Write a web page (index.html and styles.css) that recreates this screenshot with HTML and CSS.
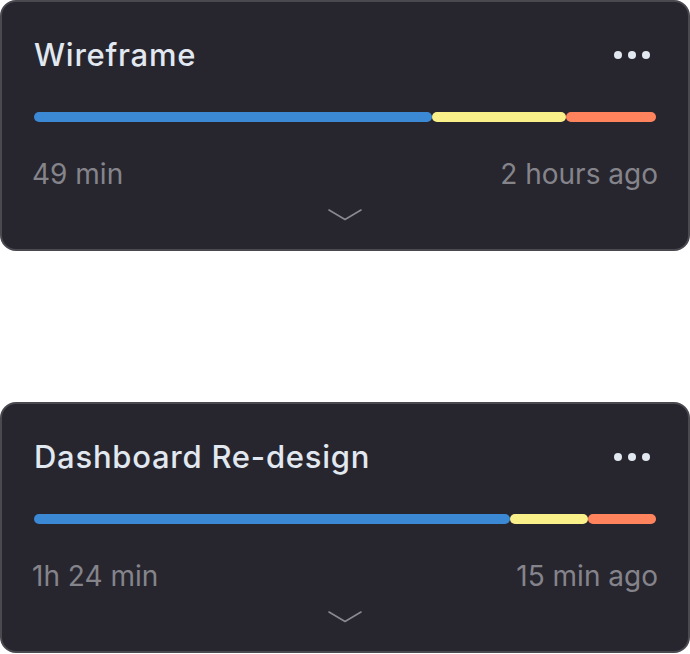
FILE: index.html
```html
<!DOCTYPE html>
<html lang="en">
<head>
    <meta charset="UTF-8">
    <meta name="viewport" content="width=device-width, initial-scale=1.0">
    <title>Tasks</title>
    <link rel="stylesheet" href="styles.css">
</head>
<body>
    <div class="task-list">
        <div class="task-card">
            <div class="task-header">
                <h2 class="task-title">Wireframe</h2>
                <div class="task-menu"><span></span><span></span><span></span></div>
            </div>
            <div class="task-bar">
                <div class="seg seg-blue" style="width: 64%"></div>
                <div class="seg seg-yellow" style="width: 21.5%"></div>
                <div class="seg seg-orange" style="width: 14.5%"></div>
            </div>
            <div class="task-footer">
                <span>49 min</span>
                <span>2 hours ago</span>
            </div>
            <div class="task-expand">
                <svg width="34" height="12" viewBox="0 0 34 12"><path d="M1 1 L17 10.5 L33 1" fill="none" stroke="#8a8990" stroke-width="1.6" stroke-linecap="round" stroke-linejoin="round"/></svg>
            </div>
        </div>

        <div class="task-card">
            <div class="task-header">
                <h2 class="task-title">Dashboard Re-design</h2>
                <div class="task-menu"><span></span><span></span><span></span></div>
            </div>
            <div class="task-bar">
                <div class="seg seg-blue" style="width: 76.5%"></div>
                <div class="seg seg-yellow" style="width: 12.5%"></div>
                <div class="seg seg-orange" style="width: 11%"></div>
            </div>
            <div class="task-footer">
                <span>1h 24 min</span>
                <span>15 min ago</span>
            </div>
            <div class="task-expand">
                <svg width="34" height="12" viewBox="0 0 34 12"><path d="M1 1 L17 10.5 L33 1" fill="none" stroke="#8a8990" stroke-width="1.6" stroke-linecap="round" stroke-linejoin="round"/></svg>
            </div>
        </div>
    </div>
</body>
</html>
```

FILE: styles.css
```css
body {
    margin: 0;
    background: #ffffff;
    font-family: 'Inter', 'Noto Sans', sans-serif;
}

.task-list {
    display: flex;
    flex-direction: column;
    gap: 151px;
}

.task-card {
    box-sizing: border-box;
    width: 690px;
    height: 251px;
    background: #27262f;
    border: 2px solid #4a4950;
    border-radius: 16px;
    padding: 32px 32px 0;
}

.task-header {
    display: flex;
    justify-content: space-between;
    align-items: center;
    height: 42px;
}

.task-title {
    margin: 0;
    font-size: 31px;
    line-height: 44px;
    font-weight: 500;
    letter-spacing: 0.75px;
    color: #e2e8f0;
}

.task-menu {
    display: flex;
    gap: 6px;
    margin-right: 6px;
}

.task-menu span {
    width: 8px;
    height: 8px;
    border-radius: 50%;
    background: #e2e8f0;
}

.task-bar {
    display: flex;
    height: 10px;
    margin-top: 36px;
}

.seg {
    height: 10px;
    border-radius: 5px;
}

.seg-blue {
    background: #3b88d4;
}

.seg-yellow {
    background: #faf08a;
}

.seg-orange {
    background: #ff845e;
}

.task-footer {
    display: flex;
    justify-content: space-between;
    margin: 32px -2px 0;
    font-size: 28px;
    line-height: 40px;
    color: #85848b;
}

.task-expand {
    display: flex;
    justify-content: center;
    margin-top: 15px;
}

.task-expand svg {
    display: block;
}
```
